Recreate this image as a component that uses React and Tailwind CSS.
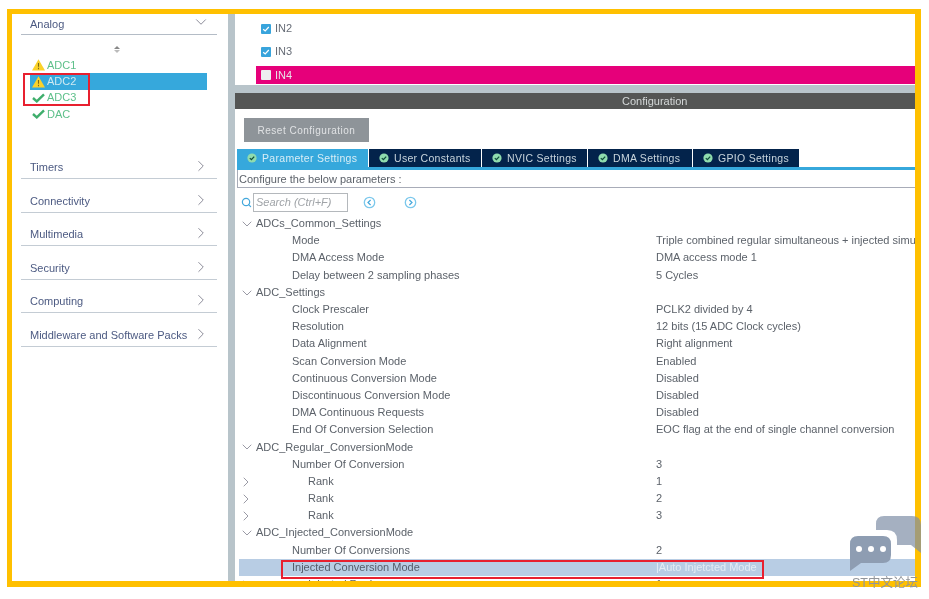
import { ChevronDown, ChevronRight, Search } from 'lucide-react';

const font = { fontFamily: '"Liberation Sans", Arial, sans-serif' };

const categories = ['Timers', 'Connectivity', 'Multimedia', 'Security', 'Computing', 'Middleware and Software Packs'];

const tabs = [
  { label: 'Parameter Settings', width: 'w-[131px]', active: true },
  { label: 'User Constants', width: 'w-[112px]' },
  { label: 'NVIC Settings', width: 'w-[105px]' },
  { label: 'DMA Settings', width: 'w-[104px]' },
  { label: 'GPIO Settings', width: 'w-[106px]' }
];

const rows = [
  { level: 0, open: true, name: 'ADCs_Common_Settings' },
  { level: 1, name: 'Mode', value: 'Triple combined regular simultaneous + injected simultaneous mode' },
  { level: 1, name: 'DMA Access Mode', value: 'DMA access mode 1' },
  { level: 1, name: 'Delay between 2 sampling phases', value: '5 Cycles' },
  { level: 0, open: true, name: 'ADC_Settings' },
  { level: 1, name: 'Clock Prescaler', value: 'PCLK2 divided by 4' },
  { level: 1, name: 'Resolution', value: '12 bits (15 ADC Clock cycles)' },
  { level: 1, name: 'Data Alignment', value: 'Right alignment' },
  { level: 1, name: 'Scan Conversion Mode', value: 'Enabled' },
  { level: 1, name: 'Continuous Conversion Mode', value: 'Disabled' },
  { level: 1, name: 'Discontinuous Conversion Mode', value: 'Disabled' },
  { level: 1, name: 'DMA Continuous Requests', value: 'Disabled' },
  { level: 1, name: 'End Of Conversion Selection', value: 'EOC flag at the end of single channel conversion' },
  { level: 0, open: true, name: 'ADC_Regular_ConversionMode' },
  { level: 1, name: 'Number Of Conversion', value: '3' },
  { level: 2, name: 'Rank', value: '1' },
  { level: 2, name: 'Rank', value: '2' },
  { level: 2, name: 'Rank', value: '3' },
  { level: 0, open: true, name: 'ADC_Injected_ConversionMode' },
  { level: 1, name: 'Number Of Conversions', value: '2' },
  { level: 1, name: 'Injected Conversion Mode', value: '|Auto Injetcted Mode', selected: true },
  { level: 2, name: 'Injected Rank', value: '1' }
];

function WarnIcon() {
  return (
    <svg width="13" height="12" viewBox="0 0 13 12">
      <path d="M6.5 0.3 L13 11.5 L0 11.5 Z" fill="#fbd22a" />
      <path d="M6.5 4 V7.8 M6.5 8.8 V10.2" stroke="#7a6a18" strokeWidth="1.1" />
    </svg>
  );
}

function CheckIcon() {
  return (
    <svg width="13" height="10" viewBox="0 0 13 10">
      <path d="M1 5 L4.8 8.4 L12 1.4" fill="none" stroke="#3fae6c" strokeWidth="2.4" />
    </svg>
  );
}

function TabCheck() {
  return (
    <svg width="10" height="10" viewBox="0 0 10 10" className="shrink-0">
      <circle cx="5" cy="5" r="4.6" fill="#8fdcae" />
      <path d="M2.8 5.1 L4.4 6.6 L7.2 3.6" fill="none" stroke="#0e4d3a" strokeWidth="1.3" />
    </svg>
  );
}

function Peripheral({ icon, label, selected }) {
  return (
    <div className={`flex h-[16.4px] items-center pl-[2px] ${selected ? 'bg-[#36a8dc] text-[#cfeaf2]' : 'text-[#5ec08a]'}`}>
      <span className="flex w-[15px] justify-start">{icon}</span>
      <span>{label}</span>
    </div>
  );
}

function Channel({ label, checked, pink }) {
  return (
    <div className={`flex items-center pl-[5px] ${pink ? 'mt-[3px] h-[18px] bg-[#e6007a] text-[#e8e0e8]' : 'h-[23px] text-[#666c76]'}`}>
      <span className={`flex h-[10px] w-[10px] items-center justify-center rounded-[1px] ${checked ? 'bg-[#38a4dc]' : 'bg-[#eeeef0]'}`}>
        {checked && (
          <svg width="8" height="8" viewBox="0 0 8 8">
            <path d="M1.2 4.2 L3.2 6 L6.8 2" fill="none" stroke="#fff" strokeWidth="1.2" />
          </svg>
        )}
      </span>
      <span className="ml-[4px]">{label}</span>
    </div>
  );
}

function TreeRow({ row }) {
  const indent = ['pl-[17px]', 'pl-[53px]', 'pl-[69px]'][row.level];
  return (
    <div className={`relative flex h-[17.2px] items-center ${row.selected ? 'bg-[#b8cde4] text-[#545c6a]' : 'text-[#5c626a]'}`}>
      {row.open && <ChevronDown size={16} strokeWidth={1} className="absolute left-0 top-[1px] text-[#667]" />}
      {row.level === 2 && <ChevronRight size={16} strokeWidth={1} className="absolute left-[-1px] top-[1px] text-[#667]" />}
      <span className={`w-[417px] shrink-0 whitespace-nowrap ${indent}`}>{row.name}</span>
      {row.value && <span className={`whitespace-nowrap ${row.selected ? 'text-[#e4ecf4]' : ''}`}>{row.value}</span>}
    </div>
  );
}

export default function App() {
  return (
    <div className="relative h-[599px] w-[929px] overflow-hidden bg-white pl-[7px] pt-[9px] text-[11px] leading-none blur-[0.3px]" style={font}>
      <div className="flex h-[578px] w-[914px] overflow-hidden border-b-[6px] border-l-[5px] border-r-[6px] border-t-[5px] border-[#ffc000]">
        {/* left: categories */}
        <aside className="w-[216px] shrink-0 bg-white pl-[9px] pr-[11px] text-[#4c5a82]">
          <div className="flex h-[21px] items-center justify-between border-b border-[#b4bcc6] pl-[9px] pr-[7px]">
            <span>Analog</span>
            <ChevronDown size={18} strokeWidth={1} className="mb-[4px] text-[#667]" />
          </div>
          <div className="flex h-[22px] flex-col items-center justify-center gap-[1px] pr-[4px] pt-[6px]">
            <span className="h-0 w-0 border-x-[3px] border-b-[3px] border-x-transparent border-b-[#888]" />
            <span className="h-0 w-0 border-x-[3px] border-t-[3px] border-x-transparent border-t-[#bbb]" />
          </div>
          <div className="ml-[9px] mr-[10px]">
            <Peripheral icon={<WarnIcon />} label="ADC1" />
            <Peripheral icon={<WarnIcon />} label="ADC2" selected />
            <Peripheral icon={<CheckIcon />} label="ADC3" />
            <Peripheral icon={<CheckIcon />} label="DAC" />
          </div>
          <div className="pt-[22.8px]">
            {categories.map((name) => (
              <div key={name} className="flex h-[33.6px] items-end justify-between whitespace-nowrap border-b border-[#c4ccd4] pb-[5px] pl-[9px] pr-[7px]">
                <span>{name}</span>
                <ChevronRight size={18} strokeWidth={1} className="mb-[-2px] text-[#667]" />
              </div>
            ))}
          </div>
        </aside>

        <div className="w-[7px] shrink-0 bg-[#b8c4ca]" />

        {/* right: channels and configuration */}
        <main className="min-w-0 flex-1 bg-white">
          <div className="pl-[21px] pt-[3px]">
            <Channel label="IN2" checked />
            <Channel label="IN3" checked />
            <Channel label="IN4" pink />
          </div>
          <div className="mt-[1px] h-[8px] bg-[#b8c4ca]" />
          <div className="flex h-[16px] items-center bg-[#545554] pl-[387px] text-[#d4d8d8]">Configuration</div>

          <button className="ml-[9px] mt-[9px] block h-[24px] w-[125px] bg-[#8e9499] pt-[1px] text-[10px] tracking-[0.5px] text-[#e0e2e4]">Reset Configuration</button>

          <div className="ml-[2px] mt-[7px] flex h-[21px] gap-px border-b-[3px] border-[#36a8dc]">
            {tabs.map((tab) => (
              <div
                key={tab.label}
                className={`flex items-center gap-[5px] whitespace-nowrap pl-[10px] text-[10.5px] tracking-[0.3px] ${tab.width} ${
                  tab.active ? 'bg-[#36a8dc] text-[#d8eef6]' : 'bg-[#03234b] text-[#c8d4dc]'
                }`}
              >
                <TabCheck />
                <span className="pt-[1px]">{tab.label}</span>
              </div>
            ))}
          </div>
          <div className="ml-[2px] flex h-[18px] items-center border-b border-l border-[#a8acb8] pl-[1px] pt-[2px] text-[#5c626a]">Configure the below parameters :</div>

          <div className="flex h-[27px] items-center pl-[6px] pt-[2px]">
            <Search size={11} strokeWidth={2.6} className="text-[#44a8dc]" />
            <div className="ml-[1px] flex h-[19px] w-[95px] items-center border border-[#b4b8bc] pl-[2px] italic text-[#a0a4a8]">Search (Ctrl+F)</div>
            <svg width="13" height="13" viewBox="0 0 13 13" className="ml-[15px]">
              <circle cx="6.5" cy="6.5" r="5.2" fill="none" stroke="#7cc8ec" strokeWidth="1.3" />
              <path d="M7.6 4 L5 6.5 L7.6 9" fill="none" stroke="#44a8dc" strokeWidth="1.2" />
            </svg>
            <svg width="13" height="13" viewBox="0 0 13 13" className="ml-[28px]">
              <circle cx="6.5" cy="6.5" r="5.2" fill="none" stroke="#7cc8ec" strokeWidth="1.3" />
              <path d="M5.4 4 L8 6.5 L5.4 9" fill="none" stroke="#44a8dc" strokeWidth="1.2" />
            </svg>
          </div>

          <div className="ml-[4px]">
            {rows.map((row, i) => (
              <TreeRow key={i} row={row} />
            ))}
          </div>
        </main>
      </div>

      {/* red annotation boxes */}
      <div className="absolute left-[23px] top-[73px] h-[33px] w-[67px] border-2 border-[#e8202f]" />
      <div className="absolute left-[281px] top-[560px] h-[18.5px] w-[483px] border-2 border-[#e8202f]" />

      {/* forum watermark */}
      <svg width="72" height="58" viewBox="0 0 72 58" className="absolute left-[850px] top-[515px]">
        <path d="M34 1 H62 Q71 1 71 10 V38 L61 30 H47 V25 Q47 15 37 15 H26 V9 Q26 1 34 1 Z" fill="#7f8fa6" opacity="0.7" />
        <path d="M8 21 H33 Q41 21 41 29 V40 Q41 48 33 48 H11 L0 56 V29 Q0 21 8 21 Z" fill="#8e9db2" />
        <circle cx="9" cy="34" r="3" fill="#fff" />
        <circle cx="21" cy="34" r="3" fill="#fff" />
        <circle cx="33" cy="34" r="3" fill="#fff" />
      </svg>
      <span className="absolute left-[852px] top-[577px] whitespace-nowrap text-[12.5px] font-normal text-[#92959a]" style={{ fontFamily: '"Liberation Sans", "Noto Sans CJK SC", sans-serif' }}>
        ST中文论坛
      </span>
    </div>
  );
}
